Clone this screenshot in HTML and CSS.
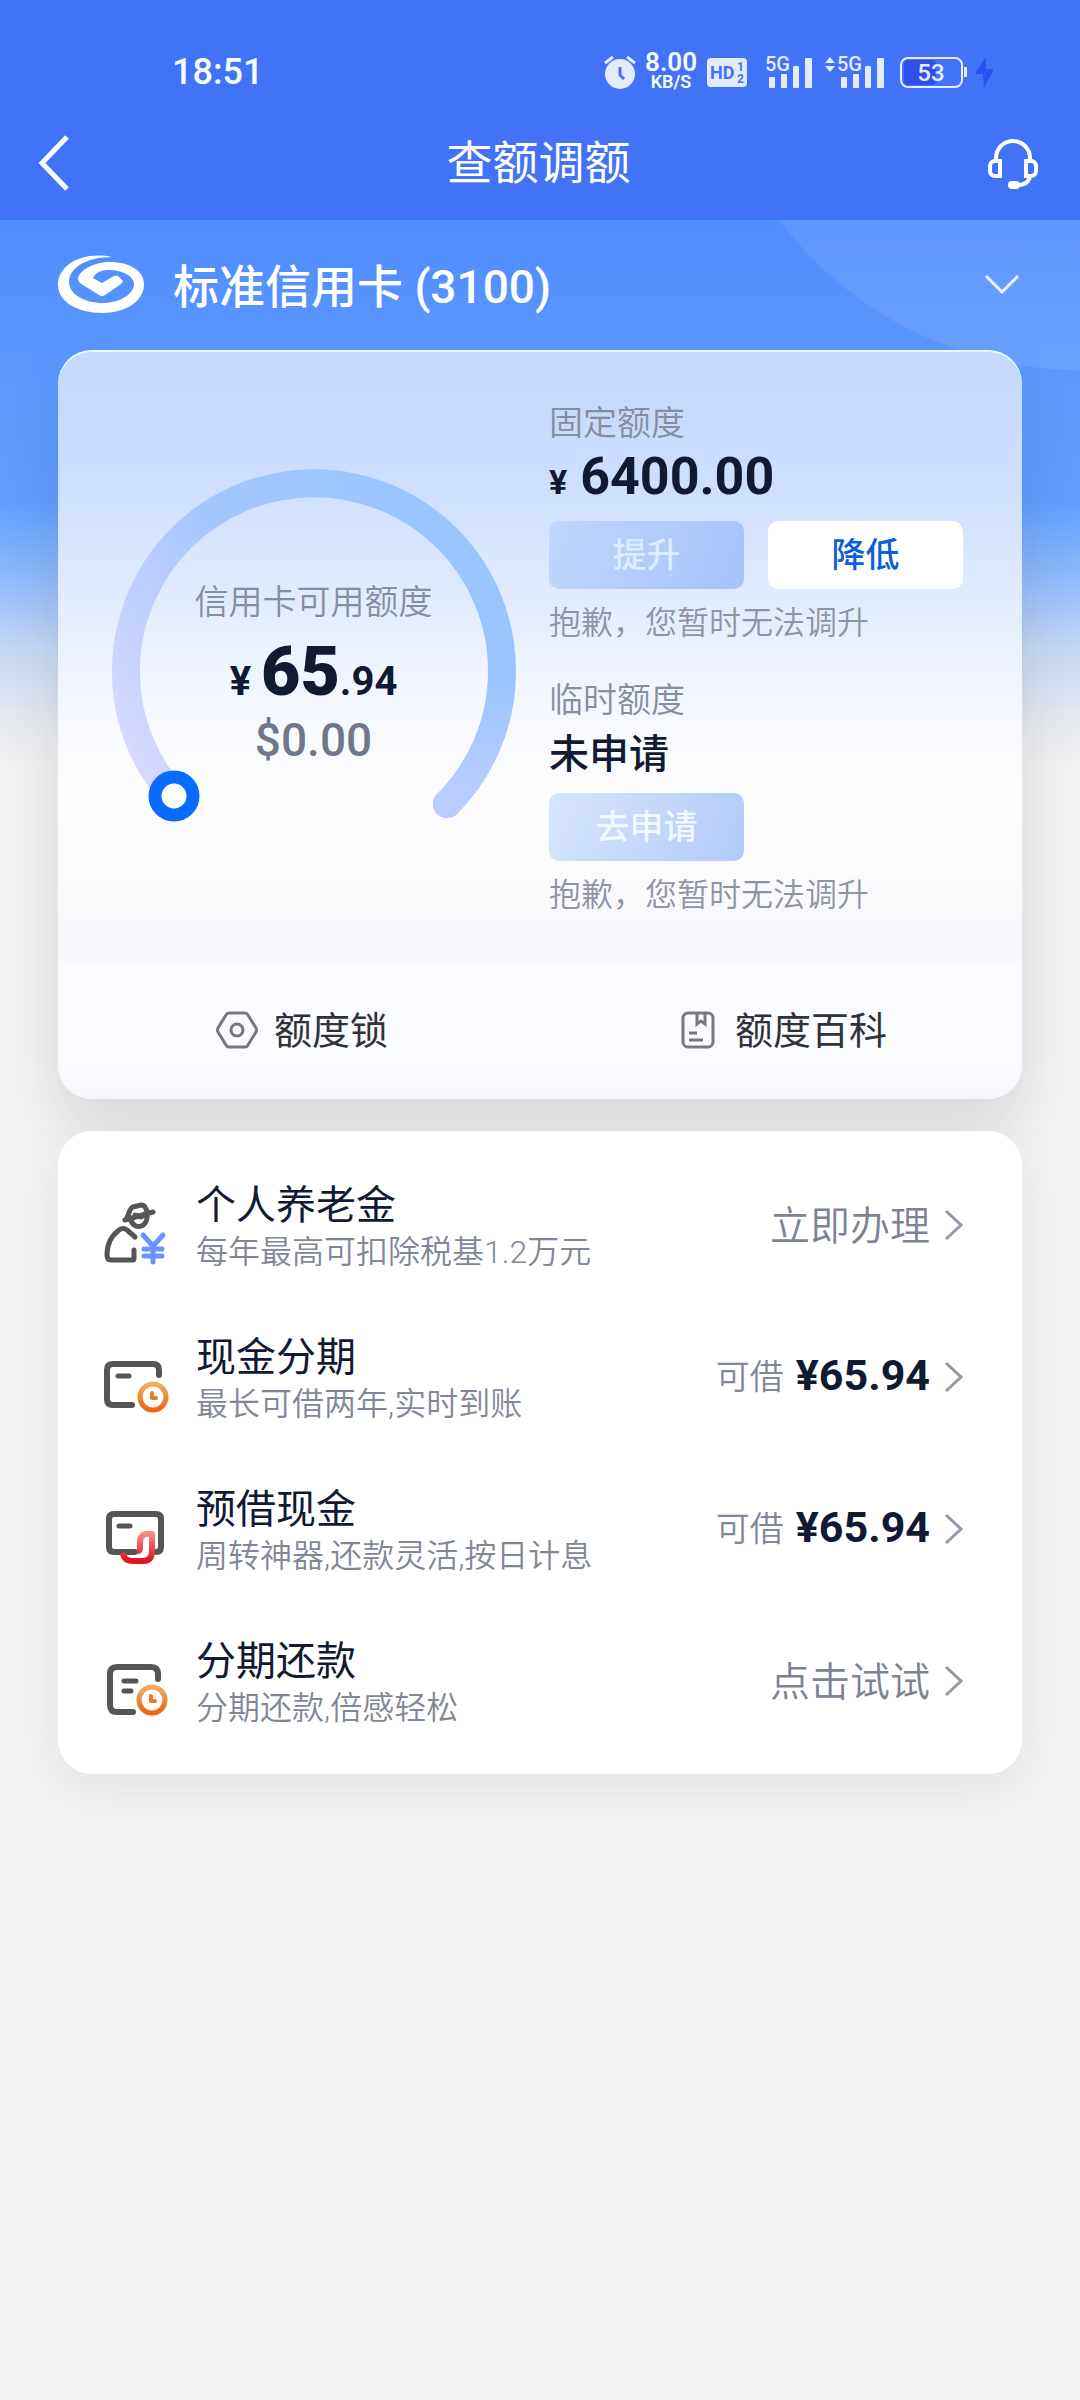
FILE: index.html
```html
<!DOCTYPE html>
<html lang="zh-CN">
<head>
<meta charset="utf-8">
<meta name="viewport" content="width=device-width, initial-scale=1">
<title>查额调额</title>
<link rel="stylesheet" href="styles.css">
</head>
<body>
<header class="topbar">
  <div class="status">
    <time class="clock">18:51</time>
    <div class="status-icons">
      <svg class="alarm" width="34" height="36" viewBox="0 0 34 36">
        <path d="M2 9 10 3M24 3l8 6" stroke="#e3ebff" stroke-width="3" fill="none"/>
        <circle cx="17" cy="20" r="15" fill="#e3ebff"/>
        <path d="M17 13v8l4 4" stroke="#4273f6" stroke-width="3" fill="none"/>
      </svg>
      <div class="speed"><span class="speed-value">8.00</span><span class="speed-unit">KB/S</span></div>
      <svg class="hd" width="40" height="29" viewBox="0 0 40 29">
        <rect width="40" height="29" rx="4" fill="#e3ebff"/>
        <text x="3" y="21" font-size="18" font-weight="700" fill="#4273f6">HD</text>
        <text x="30" y="13" font-size="12" font-weight="700" fill="#4273f6">1</text>
        <text x="30" y="25" font-size="12" font-weight="700" fill="#4273f6">2</text>
      </svg>
      <svg class="signal" width="48" height="34" viewBox="0 0 48 34" fill="#e3ebff">
        <text x="0" y="16" font-size="20" font-weight="500">5G</text>
        <rect x="4" y="22" width="6" height="11" rx="1"/><rect x="16" y="19" width="6" height="14" rx="1"/><rect x="28" y="11" width="6" height="22" rx="1"/><rect x="40" y="3" width="7" height="30" rx="1"/>
      </svg>
      <svg class="signal-data" width="60" height="34" viewBox="0 0 60 34" fill="#e3ebff">
        <path d="M0 8 5 2l5 6zM0 11h10l-5 6z"/>
        <text x="12" y="16" font-size="20" font-weight="500">5G</text>
        <rect x="16" y="22" width="6" height="11" rx="1"/><rect x="28" y="19" width="6" height="14" rx="1"/><rect x="40" y="11" width="6" height="22" rx="1"/><rect x="52" y="3" width="7" height="30" rx="1"/>
      </svg>
      <svg class="battery" width="94" height="34" viewBox="0 0 94 34">
        <rect x="4" y="5" width="32" height="25" rx="4" fill="#3150ea"/>
        <rect x="1" y="3" width="61" height="29" rx="7" fill="none" stroke="#e3ebff" stroke-width="2"/>
        <path d="M64 12h3v10h-3z" fill="#e3ebff"/>
        <text x="31" y="26" font-size="24" font-weight="500" text-anchor="middle" fill="#e3ebff">53</text>
        <path d="M86 2 75 19h8l1 14 10-19h-8z" fill="#2f50f0"/>
      </svg>
    </div>
  </div>
  <nav class="nav">
    <button class="icon-button" aria-label="返回">
      <svg width="34" height="58" viewBox="0 0 34 58"><path d="M29 3 4 29l25 26" fill="none" stroke="#f4feff" stroke-width="5"/></svg>
    </button>
    <h1 class="title">查额调额</h1>
    <button class="icon-button" aria-label="客服">
      <svg width="52" height="52" viewBox="0 0 52 52" fill="none" stroke="#fff" stroke-width="4">
        <path d="M9 24v-3a17 17 0 0 1 34 0v3"/>
        <path d="M8 24h5v15H8a5 5 0 0 1-5-5v-5a5 5 0 0 1 5-5zM44 24h-5v15h5a5 5 0 0 0 5-5v-5a5 5 0 0 0-5-5z"/>
        <path d="M43 39c-1 6-5 9-12 9"/>
        <rect x="23" y="46" width="8" height="4" rx="2"/>
      </svg>
    </button>
  </nav>
</header>

<main class="page">
  <button class="card-picker">
    <svg width="88" height="60" viewBox="0 0 88 60"><path fill="#fff" d="M54 2C24-4 0 10 0 30c0 17 20 28 44 28s42-12 42-29C86 16 72 7 52 7 38 7 21 14 20 24q0 2 2 4l19 12q3 2 6 0l16-11q3-2 1-4l-4-4q-2-1-4 0l-12 7-9-5c2-5 8-8 15-8 14 0 26 6 26 14 0 10-14 19-31 19-19 0-34-9-34-21C11 13 28 2 54 2z"/></svg>
    <span class="card-name">标准信用卡 (3100)</span>
    <svg width="36" height="22" viewBox="0 0 36 22"><path d="m2 2 16 16L34 2" fill="none" stroke="#e9fbff" stroke-width="3"/></svg>
  </button>

  <section class="quota">
    <div class="quota-body">
      <div class="gauge">
        <svg class="gauge-ring" viewBox="0 0 406 406">
          <defs>
            <linearGradient id="ring" x1="0" y1="0.8" x2="1" y2="0.3">
              <stop offset="0" stop-color="#d6d8fe"/><stop offset="0.45" stop-color="#a3c6fd"/><stop offset="1" stop-color="#99c5ff"/>
            </linearGradient>
            <linearGradient id="tail" x1="0" y1="0" x2="0" y2="1">
              <stop offset="0.1" stop-color="#b9cdff" stop-opacity="0"/><stop offset="0.95" stop-color="#b9cdff"/>
            </linearGradient>
          </defs>
          <path d="M70 336A188 188 0 1 1 336 336" fill="none" stroke="url(#ring)" stroke-width="28" stroke-linecap="round"/>
          <path d="M391 203A188 188 0 0 1 336 336" fill="none" stroke="url(#tail)" stroke-width="28" stroke-linecap="round"/>
          <circle cx="63" cy="328" r="19" fill="#fff" stroke="#0a6cff" stroke-width="13"/>
        </svg>
        <div class="gauge-text">
          <p class="label">信用卡可用额度</p>
          <p class="available">¥ <strong>65</strong>.94</p>
          <p class="foreign">$0.00</p>
        </div>
      </div>
      <div class="limits">
        <div class="limit">
          <p class="label">固定额度</p>
          <p class="amount"><small>¥</small> 6400.00</p>
          <div class="actions">
            <button class="action action-muted">提升</button>
            <button class="action action-plain">降低</button>
          </div>
          <p class="hint">抱歉，您暂时无法调升</p>
        </div>
        <div class="limit">
          <p class="label">临时额度</p>
          <p class="amount amount-none">未申请</p>
          <div class="actions">
            <button class="action action-muted action-pale">去申请</button>
          </div>
          <p class="hint">抱歉，您暂时无法调升</p>
        </div>
      </div>
    </div>
    <div class="quota-links">
      <a class="quota-link" href="#lock">
        <svg width="42" height="38" viewBox="0 0 42 38" fill="none" stroke="#77787c" stroke-width="3"><path d="M13 2h16q2 0 3 2l8 13q1 2 0 4l-8 13q-1 2-3 2H13q-2 0-3-2L2 21q-1-2 0-4l8-13q1-2 3-2z"/><circle cx="21" cy="19" r="6"/></svg>
        <span class="quota-link-text">额度锁</span>
      </a>
      <a class="quota-link" href="#wiki">
        <svg width="34" height="38" viewBox="0 0 34 38" fill="none" stroke="#77787c" stroke-width="3"><rect x="2" y="2" width="30" height="34" rx="5"/><path d="M16 2v11l4-3 4 3V2M8 22h8M8 29h14"/></svg>
        <span class="quota-link-text">额度百科</span>
      </a>
    </div>
  </section>

  <ul class="services">
    <li><a class="service" href="#pension">
      <svg class="service-icon" width="64" height="60" viewBox="0 0 64 60" fill="none" stroke="#555" stroke-width="5" stroke-linecap="round" stroke-linejoin="round">
        <path d="M31 34 23 27q-4-3-8 0C7 33 3 42 3 52q0 5 4 5h22q1 0 1-2v-8"/>
        <path d="M21 17 49 9M23 15l3-8q1-2 3-3l8-2q3 0 4 2l3 6M27 16c1 11 17 10 16-4M31 12l6 2 5-4"/>
        <path d="M39 32l10 11 10-11M49 43v16M40 46h18M40 53h18" stroke="#6a93ff" stroke-width="5"/>
      </svg>
      <span class="service-text"><span class="service-name">个人养老金</span><span class="service-note">每年最高可扣除税基1.2万元</span></span>
      <span class="service-value">立即办理</span>
      <svg class="arrow" width="20" height="32" viewBox="0 0 20 32"><path d="m2 2 15 14L2 30"/></svg>
    </a></li>
    <li><a class="service" href="#cash">
      <svg class="service-icon" width="64" height="60" viewBox="0 0 64 60" fill="none" stroke="#555" stroke-width="6" stroke-linecap="round" stroke-linejoin="round">
        <defs><linearGradient id="coin" x1="0" y1="0" x2="0" y2="1"><stop offset="0" stop-color="#f0ad5e"/><stop offset="1" stop-color="#ef6410"/></linearGradient></defs>
        <path d="M55 20v-5q0-6-6-6H9q-6 0-6 6v29q0 6 6 6h19"/>
        <path d="M14 21h11" stroke-width="5"/>
        <circle cx="49" cy="42" r="13" stroke="url(#coin)" stroke-width="5"/>
        <path d="M48 38v5h4" stroke="#ef7a20" stroke-width="4"/>
      </svg>
      <span class="service-text"><span class="service-name">现金分期</span><span class="service-note">最长可借两年,实时到账</span></span>
      <span class="service-hint">可借</span><span class="service-money">¥65.94</span>
      <svg class="arrow" width="20" height="32" viewBox="0 0 20 32"><path d="m2 2 15 14L2 30"/></svg>
    </a></li>
    <li><a class="service" href="#advance">
      <svg class="service-icon" width="64" height="60" viewBox="0 0 64 60" fill="none" stroke="#555" stroke-width="6" stroke-linecap="round" stroke-linejoin="round">
        <defs><linearGradient id="hook" x1="0" y1="0" x2="0" y2="1"><stop offset="0" stop-color="#f58a8a"/><stop offset="1" stop-color="#de1418"/></linearGradient></defs>
        <path d="M31 45H10q-5 0-5-5V12q0-5 5-5h42q5 0 5 5v28q0 5-5 5"/>
        <path d="M15 19h11" stroke-width="5"/>
        <path d="M19 46q1 8 10 8h10q9 0 9-10V27q-12-2-12 8v6q0 3-3 3" stroke="url(#hook)" stroke-linecap="butt"/>
      </svg>
      <span class="service-text"><span class="service-name">预借现金</span><span class="service-note">周转神器,还款灵活,按日计息</span></span>
      <span class="service-hint">可借</span><span class="service-money">¥65.94</span>
      <svg class="arrow" width="20" height="32" viewBox="0 0 20 32"><path d="m2 2 15 14L2 30"/></svg>
    </a></li>
    <li><a class="service" href="#repay">
      <svg class="service-icon" width="64" height="60" viewBox="0 0 64 60" fill="none" stroke="#555" stroke-width="6" stroke-linecap="round" stroke-linejoin="round">
        <path d="M54 20v-5q0-7-7-7H13q-7 0-7 7v31q0 7 7 7h16"/>
        <path d="M20 22h12M20 32h7" stroke-width="5"/>
        <circle cx="48" cy="41" r="13" stroke="url(#coin)" stroke-width="5"/>
        <path d="M47 37v5h4" stroke="#ef7a20" stroke-width="4"/>
      </svg>
      <span class="service-text"><span class="service-name">分期还款</span><span class="service-note">分期还款,倍感轻松</span></span>
      <span class="service-value">点击试试</span>
      <svg class="arrow" width="20" height="32" viewBox="0 0 20 32"><path d="m2 2 15 14L2 30"/></svg>
    </a></li>
  </ul>
</main>
</body>
</html>
```

FILE: styles.css
```css
* {
  box-sizing: border-box;
}

body {
  margin: 0;
  min-height: 100vh;
  background: #f3f3f3;
  color: #111933;
  font-family: Roboto, "Noto Sans CJK SC", sans-serif;
}

h1, p, ul {
  margin: 0;
  padding: 0;
  font-weight: 400;
}

ul {
  list-style: none;
}

svg {
  display: block;
  flex: none;
  overflow: visible;
}

button {
  border: 0;
  padding: 0;
  background: none;
  color: inherit;
  font: inherit;
}

a {
  color: inherit;
  text-decoration: none;
}

/* Status bar and title */
.topbar {
  background: #4273f6;
  color: #fff;
}

.status {
  display: flex;
  justify-content: space-between;
  align-items: center;
  height: 106px;
  padding: 38px 86px 0 172px;
}

.clock {
  font-size: 36px;
  font-weight: 500;
  color: #f4feff;
}

.status-icons {
  display: flex;
  align-items: center;
  color: #f4feff;
}

.speed {
  display: flex;
  flex-direction: column;
  align-items: center;
  margin: 0 10px 0 8px;
  font-weight: 600;
}

.speed-value {
  font-size: 26px;
  line-height: 20px;
}

.speed-unit {
  font-size: 18px;
  line-height: 20px;
}

.signal {
  margin-left: 18px;
}

.signal-data {
  margin: 0 15px 0 12px;
}

.nav {
  display: flex;
  justify-content: space-between;
  align-items: center;
  height: 114px;
  padding: 0 41px 0 38px;
}

.icon-button {
  display: flex;
  width: 52px;
}

.title {
  font-size: 46px;
  line-height: 60px;
}

/* Page body */
.page {
  padding: 0 58px 80px;
  background:
    radial-gradient(circle at 100% -227px, rgba(255, 255, 255, 0.09) 376px, transparent 378px),
    linear-gradient(#4f8cff 0, #5c9aff 160px, #609eff 280px, #8ab7fb 350px, #c5d8f5 430px, #e6e9ef 500px, #f3f3f3 550px);
}

.card-picker {
  display: flex;
  align-items: center;
  width: 100%;
  height: 130px;
  padding: 0 2px 0 0;
  gap: 27px;
  color: #fff;
}

.card-name {
  flex: 1;
  padding-bottom: 4px;
  text-align: left;
  font-size: 46px;
  font-weight: 500;
}

.quota {
  overflow: hidden;
  border-radius: 34px;
  box-shadow: inset 0 2px 0 #e6faff, 0 28px 56px rgba(60, 60, 60, 0.14);
  background: linear-gradient(#c4d9ff 0, #cadcff 100px, #d4e4ff 180px, #e2ecff 250px, #eff4ff 320px, #f9fafd 390px, #fcfcfd 440px, #fbfbfd 520px, #f5f6fa 610px);
}

.quota-body {
  display: grid;
  grid-template-columns: 1fr 414px;
  column-gap: 28px;
  padding: 53px 59px 46px 48px;
}

.gauge {
  display: grid;
  justify-self: center;
  align-self: start;
  width: 406px;
  margin-top: 65px;
}

.gauge-ring,
.gauge-text {
  grid-area: 1 / 1;
}

.gauge-text {
  padding-top: 114px;
  text-align: center;
}

.label {
  color: #868da1;
  font-size: 34px;
  font-weight: 350;
  line-height: 40px;
}

.available {
  font-size: 40px;
  font-weight: 700;
  line-height: 80px;
  margin-top: 10px;
}

.available strong {
  font-size: 68px;
}

.foreign {
  color: #71778a;
  font-size: 46px;
  font-weight: 500;
  line-height: 36px;
}

.limit + .limit {
  margin-top: 37px;
}

.amount {
  padding-top: 6px;
  font-size: 52px;
  font-weight: 700;
  line-height: 56px;
}

.amount small {
  font-size: 34px;
}

.amount-none {
  padding-top: 8px;
  font-size: 40px;
  font-weight: 500;
  line-height: 54px;
}

.actions {
  display: grid;
  grid-template-columns: 1fr 1fr;
  gap: 24px;
  margin: 11px 0 14px;
}

.action {
  height: 68px;
  padding-bottom: 6px;
  border-radius: 10px;
  font-size: 34px;
  font-weight: 500;
}

.action-muted {
  background: linear-gradient(110deg, #bfd7fd, #a5c3f9);
  color: #dcedff;
}

.action-pale {
  background: linear-gradient(110deg, #d7e5fc, #b0cbf9);
  color: #f1f8ff;
}

.action-plain {
  background: #fff;
  color: #0c5fd8;
}

.hint {
  color: #8f94a4;
  font-size: 32px;
  font-weight: 350;
  line-height: 40px;
}

.quota-links {
  display: grid;
  grid-template-columns: 1fr 1fr;
  height: 138px;
  background: linear-gradient(#fafbff 70%, #f5f7fd);
}

.quota-link {
  display: flex;
  align-items: center;
  justify-content: center;
  gap: 16px;
  padding-left: 6px;
  color: #303238;
  font-size: 38px;
}

.quota-link + .quota-link {
  gap: 20px;
}

.quota-link-text {
  padding-bottom: 6px;
}

/* Service list */
.services {
  margin-top: 32px;
  padding: 18px 58px 17px 46px;
  border-radius: 34px;
  background: #fff;
  box-shadow: 0 12px 48px rgba(60, 60, 60, 0.09);
}

.service {
  display: flex;
  align-items: center;
  height: 152px;
}

.service-icon {
  margin-top: 16px;
}

.service-text {
  display: flex;
  flex: 1;
  flex-direction: column;
  margin-left: 28px;
  padding-top: 2px;
}

.service-name {
  font-size: 40px;
  line-height: 52px;
}

.service-note {
  color: #828798;
  font-size: 32px;
  font-weight: 350;
  line-height: 40px;
}

.service-value {
  padding-bottom: 4px;
  color: #7d8294;
  font-size: 40px;
  font-weight: 350;
}

.service-hint {
  padding-bottom: 6px;
  color: #828798;
  font-size: 34px;
  font-weight: 350;
}

.service-money {
  margin-left: 12px;
  padding-bottom: 4px;
  font-size: 43px;
  font-weight: 700;
}

.arrow {
  margin-left: 14px;
  fill: none;
  stroke: #9599a4;
  stroke-width: 3;
}
```
